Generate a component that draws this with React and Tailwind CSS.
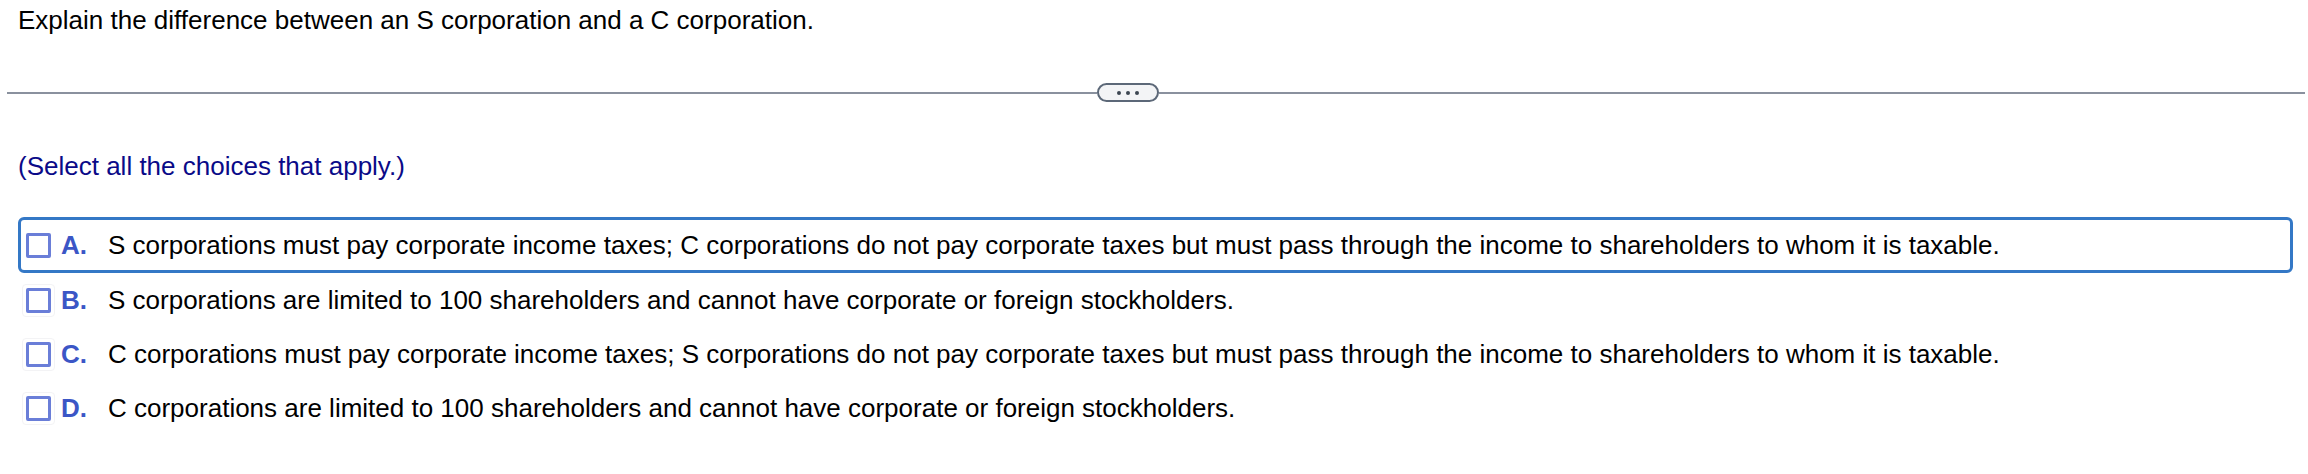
import React from 'react';

const options = [
  {
    key: 'A',
    text: 'S corporations must pay corporate income taxes; C corporations do not pay corporate taxes but must pass through the income to shareholders to whom it is taxable.',
    focused: true,
  },
  {
    key: 'B',
    text: 'S corporations are limited to 100 shareholders and cannot have corporate or foreign stockholders.',
  },
  {
    key: 'C',
    text: 'C corporations must pay corporate income taxes; S corporations do not pay corporate taxes but must pass through the income to shareholders to whom it is taxable.',
  },
  {
    key: 'D',
    text: 'C corporations are limited to 100 shareholders and cannot have corporate or foreign stockholders.',
  },
];

function Choice({ opt }) {
  return (
    <div
      className={
        opt.focused
          ? 'flex h-[56px] w-[2275px] items-center rounded-[6px] border-[3px] border-[#3478c6] pl-[1px]'
          : 'flex h-[54px] w-[2275px] items-center pl-[4px]'
      }
    >
      <div
        className={
          'flex h-[33px] w-[33px] items-center justify-center rounded-[4px] border ' +
          (opt.focused ? 'border-transparent' : 'border-[#f3f3f5]')
        }
      >
        <div className="h-[25px] w-[25px] rounded-[2px] border-[3px] border-[#6a7ed8] bg-white" />
      </div>
      <span className="ml-[6px] w-[47px] font-bold text-[#3b56c6]">{opt.key}.</span>
      <span className="text-black">{opt.text}</span>
    </div>
  );
}

export default function App() {
  return (
    <div className="h-[474px] w-[2308px] overflow-hidden bg-white font-['Liberation_Sans',Arial,sans-serif] text-[26px] leading-[28px]">
      <div className="pl-[18px] pt-[6px] text-black">
        Explain the difference between an S corporation and a C corporation.
      </div>

      <div className="mt-[49px] flex items-center pl-[7px] pr-[3px]">
        <div className="h-[2px] flex-1 bg-[#8a919e]" />
        <button className="flex h-[19px] w-[62px] items-center justify-center gap-[5px] rounded-full border-2 border-[#5c6878] bg-[#f3f4f6]">
          <span className="h-[4px] w-[4px] rounded-full bg-[#3d4652]" />
          <span className="h-[4px] w-[4px] rounded-full bg-[#3d4652]" />
          <span className="h-[4px] w-[4px] rounded-full bg-[#3d4652]" />
        </button>
        <div className="h-[2px] w-[1146px] bg-[#8a919e]" />
      </div>

      <div className="mt-[50px] pl-[18px] text-[#0a0a88]">(Select all the choices that apply.)</div>

      <div className="mt-[37px] flex flex-col pl-[18px]">
        {options.map((opt) => (
          <Choice key={opt.key} opt={opt} />
        ))}
      </div>
    </div>
  );
}
